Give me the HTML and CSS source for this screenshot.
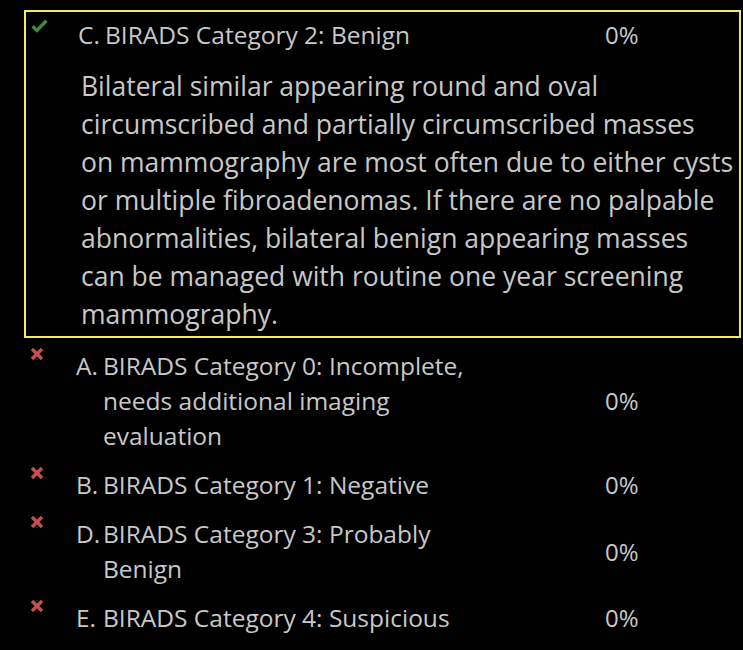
FILE: index.html
```
<!DOCTYPE html>
<html>
<head>
<meta charset="utf-8">
<link rel="stylesheet" href="styles.css">
</head>
<body>
<div class="list">
  <div class="item selected">
    <div class="row">
      <div class="icon check"><svg width="17" height="14" viewBox="0 0 17 14"><path d="M1.6 7.2 L6 11.4 L15.4 1.8" fill="none" stroke="#3f8a3f" stroke-width="3.4"/></svg></div>
      <div class="label"><span class="letter">C.</span><span class="text">BIRADS Category 2: Benign</span></div>
      <div class="pct">0%</div>
    </div>
    <p class="explain">Bilateral similar appearing round and oval<br>circumscribed and partially circumscribed masses<br>on mammography are most often due to either cysts<br>or multiple fibroadenomas. If there are no palpable<br>abnormalities, bilateral benign appearing masses<br>can be managed with routine one year screening<br>mammography.</p>
  </div>
  <div class="item">
    <div class="row">
      <div class="icon cross"><svg width="14" height="14" viewBox="0 0 14 14"><path d="M2 2 L12 12 M12 2 L2 12" stroke="#c4504e" stroke-width="3.4"/></svg></div>
      <div class="label"><span class="letter">A.</span><span class="text">BIRADS Category 0: Incomplete, needs additional imaging evaluation</span></div>
      <div class="pct">0%</div>
    </div>
  </div>
  <div class="item">
    <div class="row">
      <div class="icon cross"><svg width="14" height="14" viewBox="0 0 14 14"><path d="M2 2 L12 12 M12 2 L2 12" stroke="#c4504e" stroke-width="3.4"/></svg></div>
      <div class="label"><span class="letter">B.</span><span class="text">BIRADS Category 1: Negative</span></div>
      <div class="pct">0%</div>
    </div>
  </div>
  <div class="item">
    <div class="row">
      <div class="icon cross"><svg width="14" height="14" viewBox="0 0 14 14"><path d="M2 2 L12 12 M12 2 L2 12" stroke="#c4504e" stroke-width="3.4"/></svg></div>
      <div class="label"><span class="letter">D.</span><span class="text">BIRADS Category 3: Probably Benign</span></div>
      <div class="pct">0%</div>
    </div>
  </div>
  <div class="item">
    <div class="row">
      <div class="icon cross"><svg width="14" height="14" viewBox="0 0 14 14"><path d="M2 2 L12 12 M12 2 L2 12" stroke="#c4504e" stroke-width="3.4"/></svg></div>
      <div class="label"><span class="letter">E.</span><span class="text">BIRADS Category 4: Suspicious</span></div>
      <div class="pct">0%</div>
    </div>
  </div>
</div>
</body>
</html>
```
FILE: styles.css
```
html, body {
  margin: 0;
  padding: 0;
  background: #000;
}
body {
  font-family: "Open Sans", "Lato", sans-serif;
  color: #c8c8c8;
  width: 743px;
  height: 650px;
  overflow: hidden;
}
.list {
  padding: 10px 2px 0 24px;
  display: flex;
  flex-direction: column;
  gap: 14px;
}
.item {
  position: relative;
}
.item.selected {
  border: 2px solid #f3ec5a;
  padding: 5px 0 3px;
  margin-bottom: -4px;
}
.row {
  display: flex;
  align-items: center;
  position: relative;
}
.icon {
  position: absolute;
  left: 6px;
  top: -1px;
  line-height: 0;
}
.check { left: 5px; top: 2px; }
.label {
  margin-left: 52px;
  width: 420px;
  display: flex;
  font-size: 24.5px;
  line-height: 35px;
}
.letter {
  width: 27px;
  flex: none;
}
.text {
  flex: 1;
}
.pct {
  position: absolute;
  left: 581px;
  font-size: 24px;
  line-height: 35px;
}
.selected .pct {
  left: 579px;
}
.explain {
  margin: 15px 0 0 55px;
  width: 657px;
  white-space: nowrap;
  font-size: 26.5px;
  line-height: 38px;
}
```
